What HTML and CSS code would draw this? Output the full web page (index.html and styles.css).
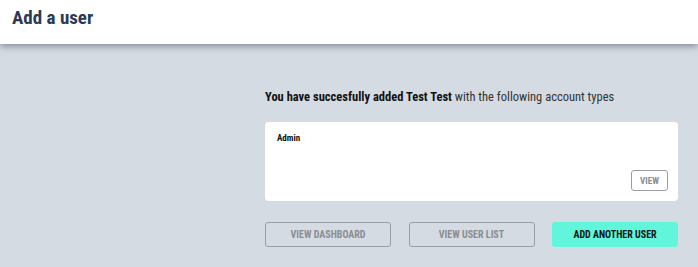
FILE: index.html
```html
<!DOCTYPE html>
<html lang="en">

<head>
    <meta charset="UTF-8">
    <meta name="viewport" content="width=device-width, initial-scale=1.0">
    <title>Add a user</title>
    <link rel="stylesheet" href="styles.css">
</head>

<body>
    <header class="topbar">
        <h1>Add a user</h1>
    </header>
    <main class="content">
        <div class="panel">
            <p class="message"><strong>You have succesfully added Test Test</strong> with the following account types</p>
            <div class="card">
                <h2>Admin</h2>
                <div class="card-foot">
                    <button class="btn btn-small">VIEW</button>
                </div>
            </div>
            <div class="actions">
                <button class="btn btn-outline">VIEW DASHBOARD</button>
                <button class="btn btn-outline">VIEW USER LIST</button>
                <button class="btn btn-primary">ADD ANOTHER USER</button>
            </div>
        </div>
    </main>
</body>

</html>
```

FILE: styles.css
```css
body {
    margin: 0;
    background-color: #d5dbe2;
    font-family: "Roboto Condensed", "Liberation Sans Narrow", Roboto, sans-serif;
    font-stretch: condensed;
    height: 267px;
    overflow: hidden;
}

.topbar {
    background-color: #fff;
    height: 44px;
    box-shadow: 0 2px 7px rgba(40, 50, 70, 0.5);
    padding: 0 12px;
    position: relative;
}

.topbar h1 {
    margin: 0;
    line-height: 36px;
    font-size: 19px;
    font-weight: bold;
    color: #2b3a55;
}

.content {
    padding: 0 20px 0 265px;
}

.panel {
    width: 413px;
}

.message {
    margin: 43px 0 0;
    font-size: 12.5px;
    line-height: 20px;
    color: #333;
}

.message strong {
    color: #111;
}

.card {
    margin-top: 15px;
    background-color: #fff;
    border-radius: 4px;
    padding: 10px 10px 10px 12px;
    height: 59px;
    display: flex;
    flex-direction: column;
}

.card h2 {
    margin: 0;
    font-size: 9px;
    line-height: 12px;
    font-weight: bold;
    color: #111;
}

.card-foot {
    margin-top: auto;
    display: flex;
    justify-content: flex-end;
}

.btn {
    cursor: pointer;
    font-family: inherit;
    font-stretch: condensed;
    font-weight: bold;
    background-color: transparent;
    border: 1px solid #9a9ea4;
    border-radius: 3px;
    color: #8a8d92;
}

.btn-small {
    background-color: #fff;
    width: 37px;
    height: 21px;
    font-size: 9px;
    padding: 0;
}

.actions {
    margin-top: 21px;
    display: flex;
    justify-content: space-between;
}

.actions .btn {
    width: 126px;
    height: 25px;
    font-size: 10px;
    padding: 0;
}

.btn-primary {
    background-color: #61f5dc;
    border-color: #61f5dc;
    color: #111;
}
```
